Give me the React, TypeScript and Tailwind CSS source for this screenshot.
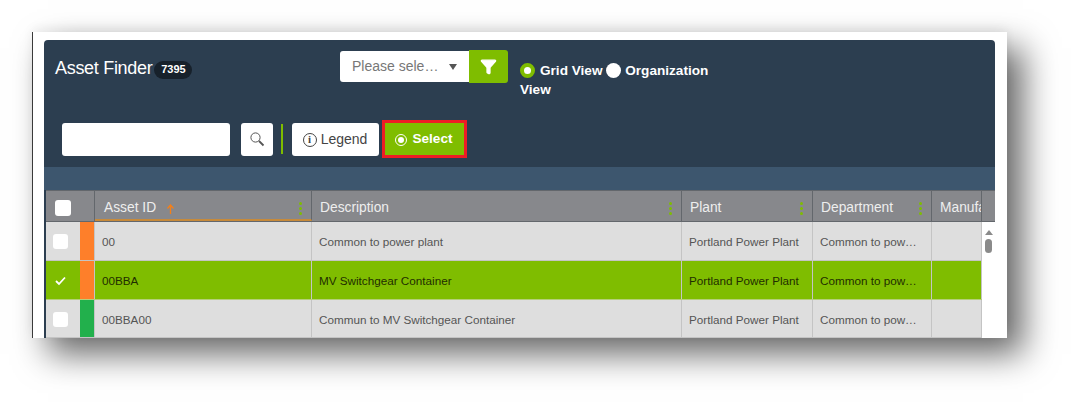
import { Filter } from 'lucide-react';

const green = 'bg-[#7fbd00]';

// column widths from the grid header
const rows = [
  { id: '00', desc: 'Common to power plant', bar: 'bg-[#fe7f2a]', selected: false, h: 'h-[39px]' },
  { id: '00BBA', desc: 'MV Switchgear Container', bar: 'bg-[#fe7f2a]', selected: true, h: 'h-[39px]' },
  { id: '00BBA00', desc: 'Commun to MV Switchgear Container', bar: 'bg-[#22b04c]', selected: false, h: 'h-[38px]' },
];

function Dots() {
  return (
    <span className="flex flex-col gap-[2px] ml-auto">
      <i className="block w-[3px] h-[3px] rounded-full bg-[#7fbd00]" />
      <i className="block w-[3px] h-[3px] rounded-full bg-[#7fbd00]" />
      <i className="block w-[3px] h-[3px] rounded-full bg-[#7fbd00]" />
    </span>
  );
}

function HeaderCell({ label, width, dots = true }: { label: string; width: string; dots?: boolean }) {
  return (
    <div className={`${width} flex items-center pl-2 pr-[9px] pt-[5px] border-r border-[#63676c] overflow-hidden whitespace-nowrap`}>
      <span>{label}</span>
      {dots && <Dots />}
    </div>
  );
}

function Cell({ width, children }: { width: string; children?: React.ReactNode }) {
  return (
    <div className={`${width} shrink-0 h-full flex items-center pl-[7px] pt-[2px] border-r border-[#c4c4c4] overflow-hidden whitespace-nowrap`}>
      {children}
    </div>
  );
}

export default function App() {
  return (
    <div className="h-[403px] w-[1072px] bg-white pt-8 pl-8 overflow-hidden font-['Liberation_Sans',Arial,sans-serif]">
      <div className="w-[975px] h-[306px] bg-white border-l border-[#3a3a3a] pl-[11px] pt-2 shadow-[16px_16px_32px_rgba(0,0,0,0.6),0_-4px_10px_rgba(0,0,0,0.05)] overflow-hidden">
        <div className="w-[951px] h-[310px] bg-[#2c3e50] rounded-t-[4px] flex flex-col">
          {/* toolbar */}
          <div className="h-[127px]">
            <div className="flex items-start pt-[10px]">
              <div className="flex items-center ml-[11px] w-[285px] h-[37px]">
                <span className="text-[18px] tracking-[-0.3px] text-white">Asset Finder</span>
                <span className="ml-[2px] mt-[2px] h-[18px] w-[38px] rounded-full bg-[#17212b] text-white text-[11px] font-bold flex items-center justify-center">7395</span>
              </div>
              <div className="flex items-center h-[33px]">
                <div className="w-[129px] h-[31px] bg-white rounded-l-[3px] flex items-center pl-3 pr-3 text-[14px] text-[#777]">
                  <span>Please sele…</span>
                  <span className="ml-auto w-0 h-0 border-x-[4px] border-x-transparent border-t-[6px] border-t-[#555]" />
                </div>
                <div className={`w-[39px] h-[33px] ${green} rounded-r-[3px] flex items-center justify-center`}>
                  <Filter size={17} className="text-white fill-white" />
                </div>
              </div>
              <div className="ml-3 mt-[11px] w-[205px] text-[13.6px] leading-[19px] font-bold text-white">
                <span className="inline-block align-[-3px] w-[15px] h-[15px] rounded-full bg-white border-[4px] border-[#7fbd00] mr-[5px]" />
                Grid View{' '}
                <span className="inline-block align-[-3px] w-[15px] h-[15px] rounded-full bg-white mr-1" />
                Organization View
              </div>
            </div>
            <div className="flex items-center mt-[21px] ml-[18px] h-[38px]">
              <div className="w-[168px] h-[33px] bg-white rounded-[3px]" />
              <div className="ml-[11px] w-[32px] h-[33px] bg-white rounded-[3px] flex items-center justify-center">
                <svg width="16" height="16" viewBox="0 0 16 16" className="text-[#555]">
                  <circle cx="6.5" cy="6.5" r="4.6" fill="none" stroke="currentColor" strokeWidth="1" />
                  <path d="M10 10l4.5 4.5" fill="none" stroke="currentColor" strokeWidth="1.8" />
                </svg>
              </div>
              <div className="ml-2 w-[1.5px] h-[30px] bg-[#7fbd00]" />
              <div className="ml-[9px] w-[87px] h-[33px] bg-white rounded-[3px] flex items-center justify-center gap-1 text-[14px] text-[#444]">
                <span className="w-[14px] h-[14px] rounded-full border border-[#444] text-[11px] font-bold font-['Liberation_Serif',serif] flex items-center justify-center mt-[1px]">i</span>
                Legend
              </div>
              <div className={`ml-[3px] w-[85px] h-[38px] border-[3px] border-[#ee1c25] ${green} flex items-center justify-center gap-[5px] text-[13.6px] font-bold text-white`}>
                <span className="w-[12px] h-[12px] rounded-full border border-white flex items-center justify-center mt-[1px]">
                  <i className="block w-[6px] h-[6px] rounded-full bg-white" />
                </span>
                Select
              </div>
            </div>
          </div>

          <div className="h-[23px] bg-[#3d566e] shrink-0" />

          {/* grid */}
          <div className="ml-[2px] flex h-[32px] shrink-0 bg-[#87888c] border-t border-[#63676c] border-b text-[13.8px] text-[#eee]">
            <div className="w-[49px] flex items-center pl-[9px] border-r border-[#63676c] shrink-0">
              <span className="w-[16px] h-[16px] bg-white rounded-[3px] mt-[4px]" />
            </div>
            <div className="w-[217px] shrink-0 flex items-center pl-[9px] pr-[9px] pt-[7px] border-r border-[#63676c] border-b-2 border-b-[#c78a3a]">
              <span>Asset ID</span>
              <svg width="9" height="10" viewBox="0 0 9 10" className="ml-[10px] text-[#f57f17]">
                <path d="M4.5 10V2M1.5 4.5l3-3.5 3 3.5" fill="none" stroke="currentColor" strokeWidth="1.3" />
              </svg>
              <Dots />
            </div>
            <HeaderCell label="Description" width="w-[370px] shrink-0" />
            <HeaderCell label="Plant" width="w-[131px] shrink-0" />
            <HeaderCell label="Department" width="w-[119px] shrink-0" />
            <HeaderCell label="Manufacturer" width="w-[50px] shrink-0" dots={false} />
            <div className="flex-1" />
          </div>

          <div className="ml-[2px] flex flex-1">
            <div className="w-[936px] shrink-0">
              {rows.map((r) => (
                <div
                  key={r.id}
                  className={`${r.h} flex border-b ${r.selected ? 'bg-[#7fbd00] text-[#1f2e00] border-[#b5cf7a]' : 'bg-[#dedede] text-[#555] border-[#c4c4c4]'} text-[11.7px]`}
                >
                  <div className="w-[34px] shrink-0 flex items-center pl-[7px] pt-[1px]">
                    {r.selected ? (
                      <svg width="15" height="15" viewBox="0 0 15 15" className="text-white">
                        <path d="M3 8l3 3 6-6.5" fill="none" stroke="currentColor" strokeWidth="1.8" />
                      </svg>
                    ) : (
                      <span className="w-[15px] h-[15px] bg-white rounded-[3px]" />
                    )}
                  </div>
                  <div className={`w-[15px] shrink-0 ${r.bar} border-r border-[#c4c4c4]`} />
                  <Cell width="w-[217px]">{r.id}</Cell>
                  <Cell width="w-[370px]">{r.desc}</Cell>
                  <Cell width="w-[131px]">Portland Power Plant</Cell>
                  <Cell width="w-[119px]">Common to pow…</Cell>
                  <Cell width="w-[50px]" />
                </div>
              ))}
            </div>
            <div className="w-[13px] bg-white flex flex-col items-center pt-[8px] h-[116px]">
              <span className="w-0 h-0 border-x-[4px] border-x-transparent border-b-[5px] border-b-[#8a8a8a]" />
              <span className="mt-[4px] w-[7px] h-[14px] rounded-full bg-[#8a8a8a]" />
            </div>
          </div>
        </div>
      </div>
    </div>
  );
}
